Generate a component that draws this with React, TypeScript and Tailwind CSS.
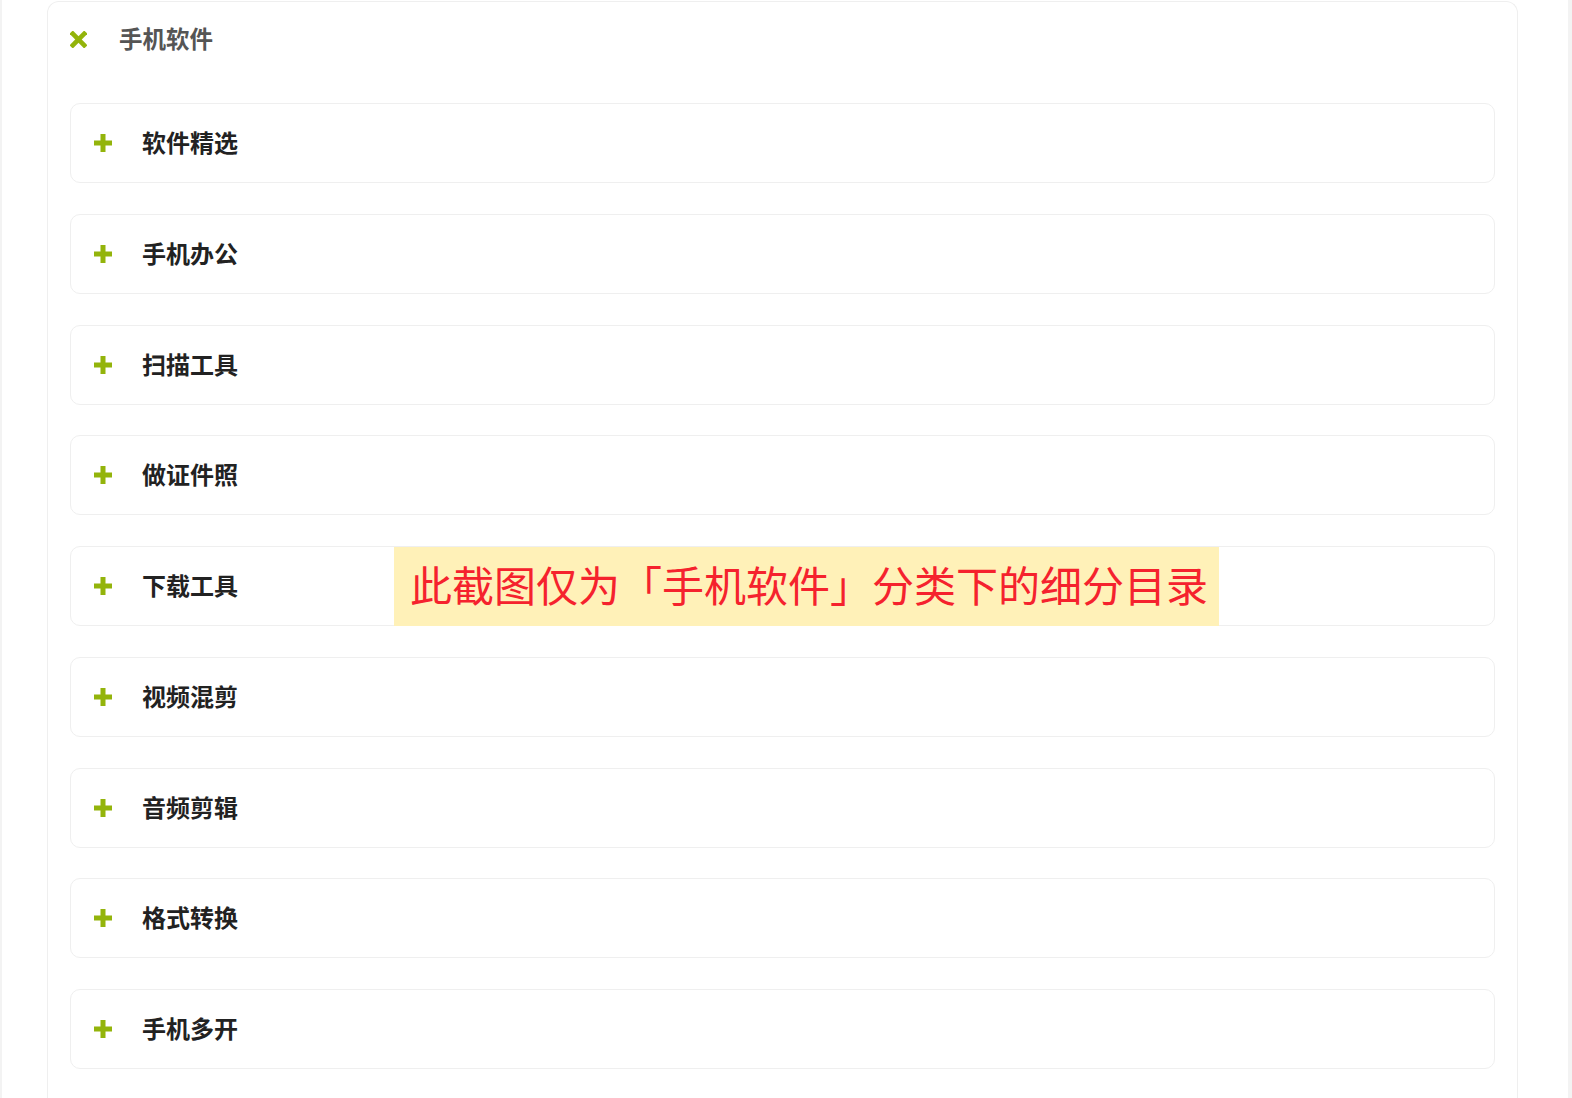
const items = ["软件精选", "手机办公", "扫描工具", "做证件照", "下载工具", "视频混剪", "音频剪辑", "格式转换", "手机多开"];

function PlusIcon() {
  return (
    <svg width="18" height="18" viewBox="0 0 18 18" aria-hidden="true">
      <rect x="6.5" y="0" width="5" height="18" fill="#93b40b" />
      <rect x="0" y="6.5" width="18" height="5" fill="#93b40b" />
    </svg>
  );
}

function CloseIcon() {
  return (
    <svg width="17" height="17" viewBox="0 0 18 18" aria-hidden="true">
      <g transform="rotate(45 9 9)">
        <rect x="6.5" y="-2" width="5" height="22" fill="#93b40b" />
        <rect x="-2" y="6.5" width="22" height="5" fill="#93b40b" />
      </g>
    </svg>
  );
}

export default function App() {
  return (
    <div
      className="relative flex h-[1098px] w-full overflow-hidden bg-white"
      style={{ fontFamily: '"Noto Sans CJK SC", "Noto Sans", sans-serif' }}
    >
      <div className="w-[2px] shrink-0 bg-[#f3f3f3]" />
      <div className="ml-[45px] mt-[1px] h-[1200px] w-[1471px] shrink-0 rounded-t-[12px] border border-b-0 border-[#efefef] px-[22px]">
        <div className="flex h-[74px] items-center">
          <CloseIcon />
          <span className="ml-[32px] text-[23.5px] font-bold leading-none text-[#555]">手机软件</span>
        </div>
        <div className="mt-[27px] flex flex-col gap-[30.75px]">
          {items.map((label) => (
            <div
              key={label}
              className="flex h-[80px] items-center rounded-[10px] border border-[#efefef] pl-[23px]"
            >
              <PlusIcon />
              <span className="ml-[30px] pb-[2px] text-[24px] font-bold leading-none text-[#222]">{label}</span>
            </div>
          ))}
        </div>
      </div>
      <div className="ml-auto w-[4px] shrink-0 bg-[#f3f3f3]" />

      <div className="absolute left-[394px] top-[547px] flex h-[79px] w-[825px] items-center bg-[#fff1b8] pb-[6px] pl-[16px]">
        <span className="whitespace-nowrap text-[42px] leading-none text-[#f5222d]">
          此截图仅为「手机软件」分类下的细分目录
        </span>
      </div>
    </div>
  );
}
